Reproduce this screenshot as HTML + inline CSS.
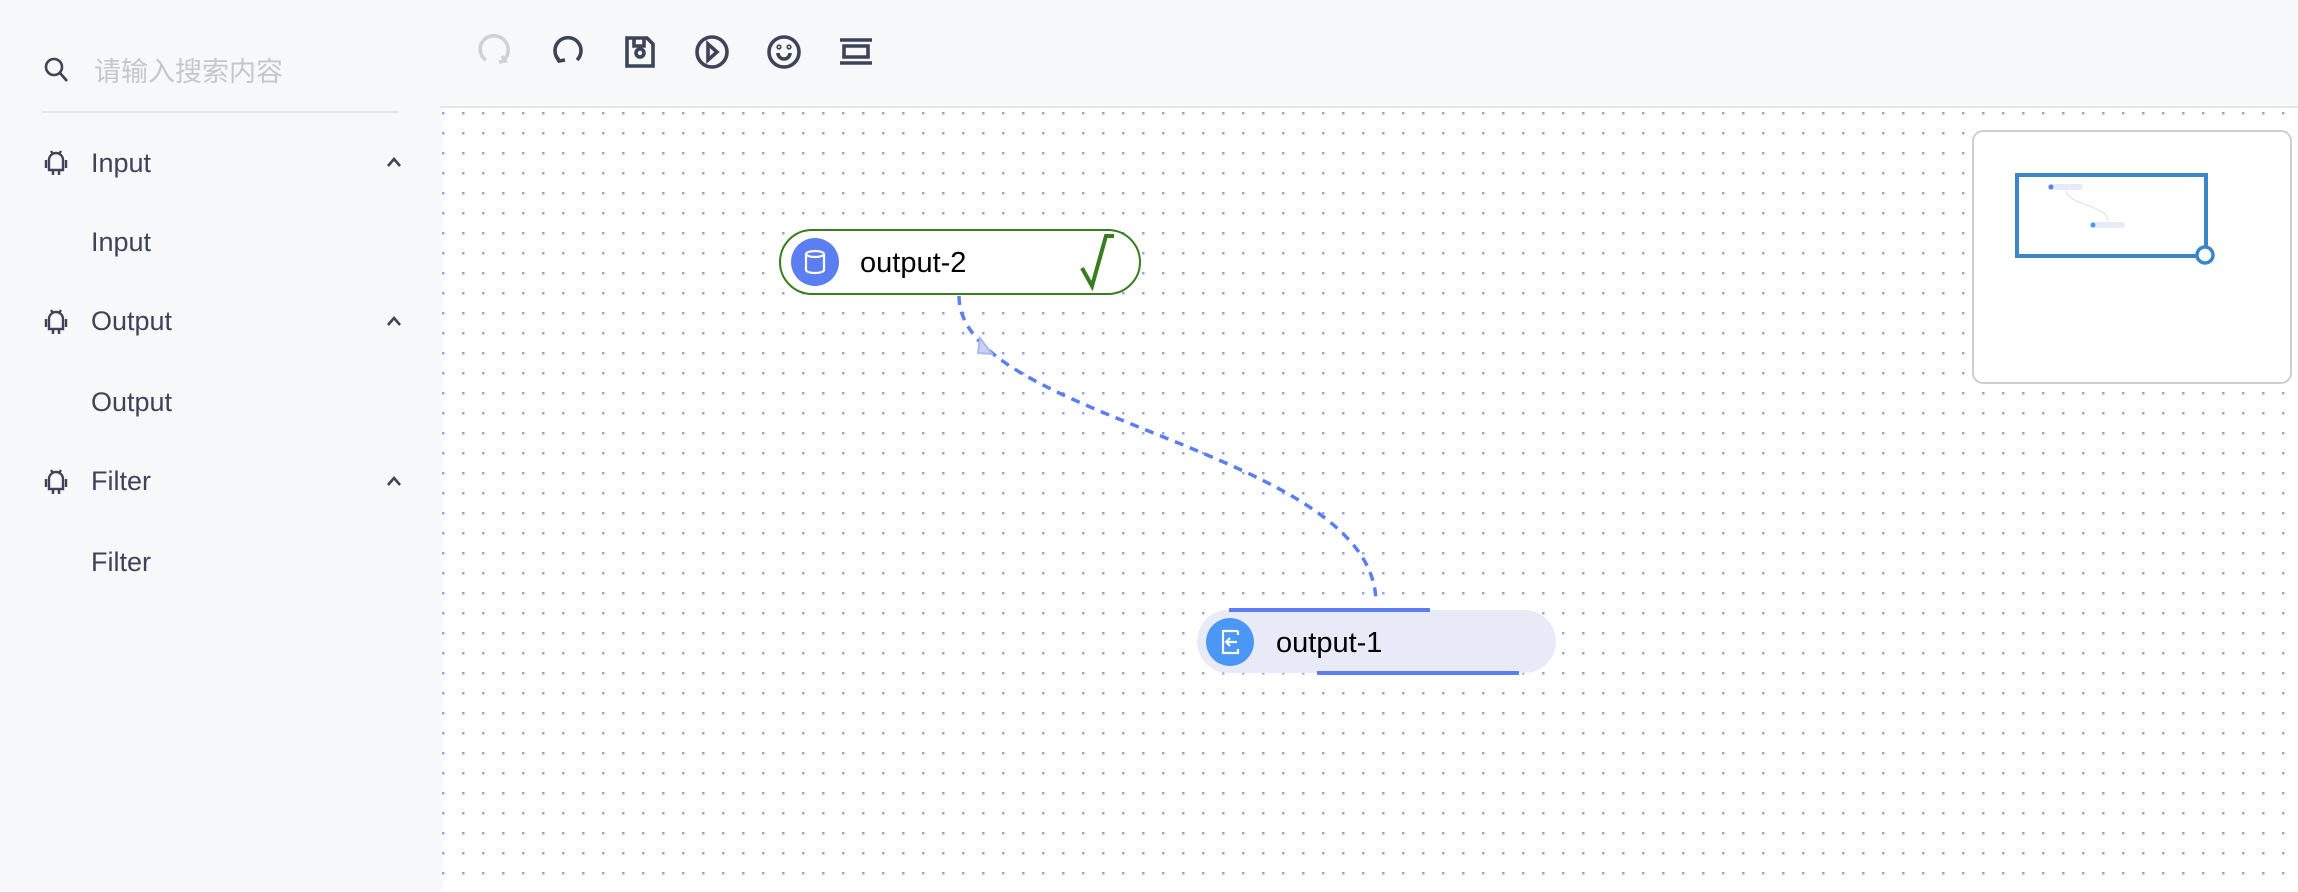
<!DOCTYPE html>
<html><head><meta charset="utf-8"><style>
*{margin:0;padding:0;box-sizing:border-box}
body{width:2298px;height:892px;overflow:hidden;background:#fff;font-family:"Liberation Sans","Noto Sans CJK SC",sans-serif;position:relative}
.side{position:absolute;left:0;top:0;width:440px;height:892px;background:#f7f8fa;box-shadow:2px 0 6px rgba(0,0,0,0.04)}
.tb{position:absolute;left:440px;top:0;width:1858px;height:108px;background:#f7f8fa;border-bottom:2px solid #e4e6ee}
.ph{position:absolute;left:94px;top:52px;font-size:27px;color:#c4c7ce;font-family:"Noto Sans CJK SC",sans-serif;line-height:36px}
.div{position:absolute;left:42px;top:111px;width:357px;height:2px;background:#e2e4ea}
.it{position:absolute;left:91px;font-size:27px;color:#3d4459;line-height:32px}
.and{position:absolute;left:44px}
.chev{position:absolute;left:386px}
</style></head><body>
<div class="side">
<svg style="position:absolute;left:42px;top:55px" width="28" height="30" viewBox="0 0 28 30"><circle cx="12" cy="12" r="8" fill="none" stroke="#3d4459" stroke-width="2.6"/><line x1="18" y1="18" x2="25" y2="26" stroke="#3d4459" stroke-width="2.8"/></svg>
<div class="ph">请输入搜索内容</div>
<div class="div"></div>
<div class="it" style="top:147px">Input</div>
<div class="it" style="top:226px">Input</div>
<div class="it" style="top:305px">Output</div>
<div class="it" style="top:386px">Output</div>
<div class="it" style="top:465px">Filter</div>
<div class="it" style="top:546px">Filter</div>
<svg class="and" style="top:148px" width="24" height="30" viewBox="0 0 24 30"><g fill="none" stroke="#3d4459" stroke-width="2.4"><path d="M5 12a7 7 0 0 1 14 0v10H5z"/><line x1="7" y1="3" x2="9" y2="6"/><line x1="17" y1="3" x2="15" y2="6"/><line x1="2" y1="12" x2="2" y2="20"/><line x1="22" y1="12" x2="22" y2="20"/><line x1="9" y1="22" x2="9" y2="27"/><line x1="15" y1="22" x2="15" y2="27"/></g></svg>
<svg class="and" style="top:307px" width="24" height="30" viewBox="0 0 24 30"><g fill="none" stroke="#3d4459" stroke-width="2.4"><path d="M5 12a7 7 0 0 1 14 0v10H5z"/><line x1="7" y1="3" x2="9" y2="6"/><line x1="17" y1="3" x2="15" y2="6"/><line x1="2" y1="12" x2="2" y2="20"/><line x1="22" y1="12" x2="22" y2="20"/><line x1="9" y1="22" x2="9" y2="27"/><line x1="15" y1="22" x2="15" y2="27"/></g></svg>
<svg class="and" style="top:467px" width="24" height="30" viewBox="0 0 24 30"><g fill="none" stroke="#3d4459" stroke-width="2.4"><path d="M5 12a7 7 0 0 1 14 0v10H5z"/><line x1="7" y1="3" x2="9" y2="6"/><line x1="17" y1="3" x2="15" y2="6"/><line x1="2" y1="12" x2="2" y2="20"/><line x1="22" y1="12" x2="22" y2="20"/><line x1="9" y1="22" x2="9" y2="27"/><line x1="15" y1="22" x2="15" y2="27"/></g></svg>
<svg class="chev" style="top:156px" width="16" height="12"><path d="M2 10L8 3L14 10" fill="none" stroke="#3d4459" stroke-width="2.6"/></svg>
<svg class="chev" style="top:315px" width="16" height="12"><path d="M2 10L8 3L14 10" fill="none" stroke="#3d4459" stroke-width="2.6"/></svg>
<svg class="chev" style="top:475px" width="16" height="12"><path d="M2 10L8 3L14 10" fill="none" stroke="#3d4459" stroke-width="2.6"/></svg>
</div>
<div class="tb"></div>
<svg style="position:absolute;left:0;top:0" width="2298" height="892">
<defs><pattern id="d" x="442" y="112" width="20" height="20" patternUnits="userSpaceOnUse"><rect width="2.5" height="2.5" fill="#97a3f6"/></pattern></defs>
<rect x="441" y="110" width="1857" height="782" fill="url(#d)"/>
<g fill="none" stroke-width="3.6" stroke-linecap="butt">
<path d="M483 41a13 13 0 1 1 22 18" stroke="#cfd1d6"/><path d="M486 60a13 13 0 0 1-3-19" stroke="#cfd1d6"/><path d="M502 56l3 5-6 1" stroke="#cfd1d6"/>
<path d="M559 60a13 13 0 1 1 18 0" stroke="#3d4459"/><path d="M556 56l3 5 6-1" stroke="#3d4459"/>
<path d="M627 38h20l6 6v22h-26z" stroke="#3d4459"/><path d="M634 38v8h10v-8" stroke="#3d4459"/><circle cx="640" cy="53" r="4" stroke="#3d4459"/>
<circle cx="712" cy="52" r="15" stroke="#3d4459"/><path d="M708 44v16l9-8z" stroke="#3d4459"/>
<circle cx="784" cy="52" r="15" stroke="#3d4459"/><path d="M778 53a6 6 0 0 0 12 0" stroke="#3d4459"/><circle cx="779" cy="47" r="0.8" stroke="#3d4459"/><circle cx="789" cy="47" r="0.8" stroke="#3d4459"/>
<path d="M840 40h32M840 63h32M844 46h24v11h-24z" stroke="#3d4459"/>
</g>
<path d="M959 296 C959 420 1376 450 1376 603" fill="none" stroke="#5b7ff2" stroke-width="3.5" stroke-dasharray="9,7"/>
<path d="M980 338 L978 353 L992 354 Z" fill="#c9d2f5" stroke="#a9b8f0" stroke-width="2"/>
<rect x="780" y="230" width="360" height="64" rx="32" fill="#fff" stroke="#3a7d1e" stroke-width="2"/>
<circle cx="815" cy="262" r="24" fill="#5b7ff2"/>
<path d="M806 254v16a9 3 0 0 0 18 0v-16" fill="none" stroke="#fff" stroke-width="2.2"/><ellipse cx="815" cy="254" rx="9" ry="3" fill="none" stroke="#fff" stroke-width="2.2"/>
<text x="860" y="272" font-size="29" font-family="Liberation Sans,sans-serif" fill="#000">output-2</text>
<path d="M1082 268l10 18l14-50h8" fill="none" stroke="#3a7d1e" stroke-width="4"/>
<rect x="1197" y="610" width="359" height="63" rx="31.5" fill="#e8ebf7"/>
<line x1="1229" y1="610" x2="1430" y2="610" stroke="#5b7ff2" stroke-width="4"/>
<line x1="1317" y1="673" x2="1519" y2="673" stroke="#5b7ff2" stroke-width="4"/>
<circle cx="1230" cy="642" r="24" fill="#4a97f5"/>
<path d="M1238 631h-15v22h15v-4M1238 635v-4M1237 642h-11M1230 638l-4 4 4 4" fill="none" stroke="#fff" stroke-width="2.2"/>
<text x="1276" y="652" font-size="29" font-family="Liberation Sans,sans-serif" fill="#000">output-1</text>
<rect x="1973" y="131" width="318" height="252" rx="10" fill="#fff" stroke="#cfcfcf" stroke-width="2"/>
<rect x="2017" y="175" width="189" height="81" fill="none" stroke="#3a86c8" stroke-width="4"/>
<circle cx="2205" cy="255" r="8" fill="#fff" stroke="#3a86c8" stroke-width="3.5"/>
<rect x="2048" y="184" width="35" height="6" rx="3" fill="#e8ebf7"/><circle cx="2051" cy="187" r="2.5" fill="#5b7ff2"/>
<rect x="2090" y="222" width="35" height="6" rx="3" fill="#e8ebf7"/><circle cx="2093" cy="225" r="2.5" fill="#4a97f5"/>
<path d="M2066 190 C2066 205 2108 205 2108 221" fill="none" stroke="#ddd" stroke-width="1"/>
</svg>
</body></html>
